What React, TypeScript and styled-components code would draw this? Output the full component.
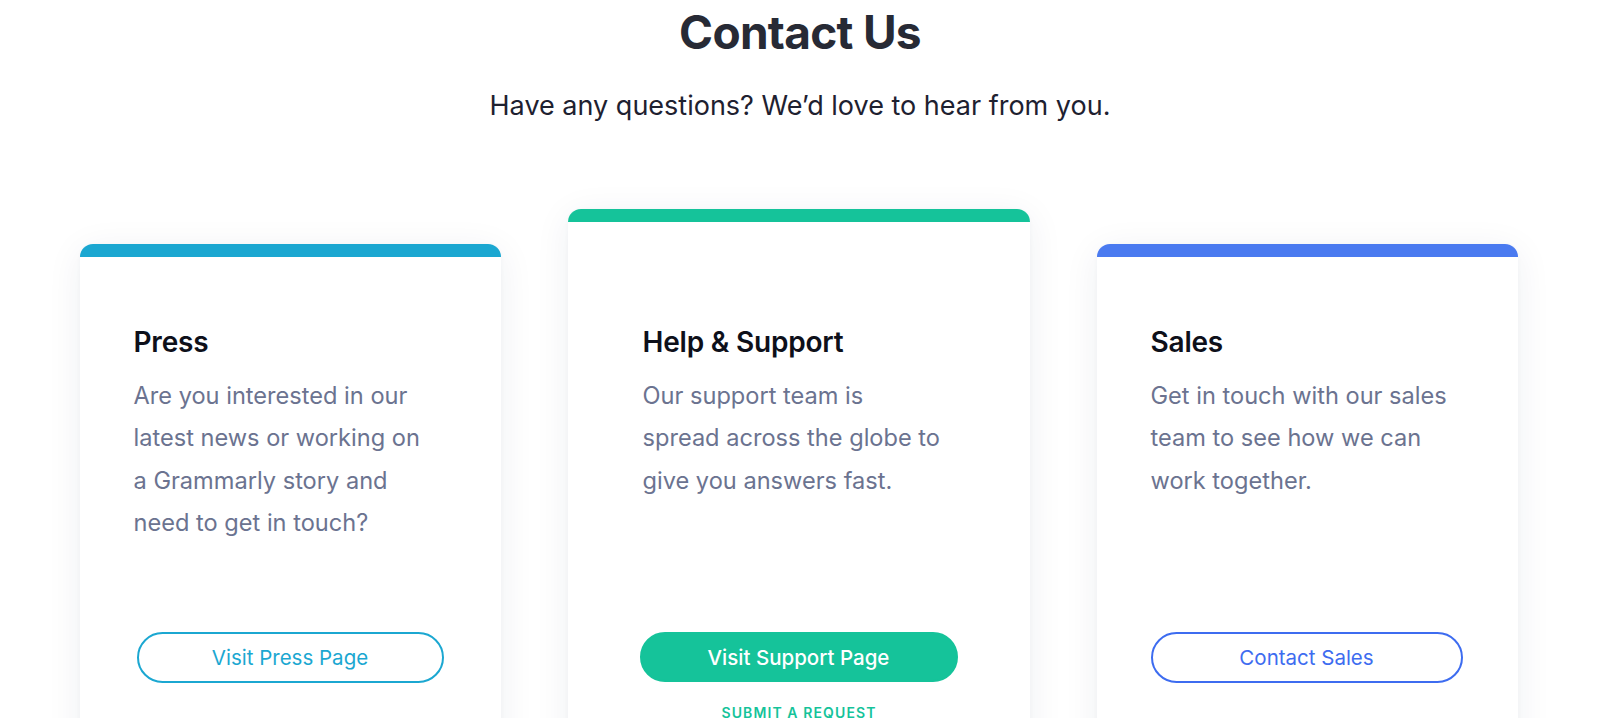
import React from "react";
import styled, { createGlobalStyle } from "styled-components";

const GlobalStyle = createGlobalStyle`
  html, body {
    margin: 0;
    padding: 0;
    background: #ffffff;
    overflow: hidden;
  }
  body {
    font-family: Inter, "Noto Sans", "Liberation Sans", sans-serif;
    -webkit-font-smoothing: antialiased;
  }
  * { box-sizing: border-box; }
`;

const Page = styled.main`
  height: 718px;
  overflow: hidden;
  display: flex;
  flex-direction: column;
  align-items: center;
  padding-top: 4px;
`;

const Title = styled.h1`
  margin: 0;
  font-size: 46px;
  line-height: 56px;
  font-weight: 700;
  color: #272a35;
  letter-spacing: -0.7px;
`;

const Subtitle = styled.p`
  margin: 30px 0 0;
  font-size: 27px;
  line-height: 32px;
  font-weight: 400;
  color: #1e2130;
`;

const CardRow = styled.div`
  margin-top: 87px;
  padding-right: 3px;
  display: flex;
  align-items: flex-start;
  gap: 67px;
`;

const Card = styled.section<{ $width: number; $offset: number }>`
  width: ${(p) => p.$width}px;
  margin-top: ${(p) => p.$offset}px;
  height: 560px;
  background: #ffffff;
  border-radius: 13px;
  overflow: hidden;
  box-shadow: 0 6px 36px rgba(30, 40, 80, 0.07), 0 1px 4px rgba(30, 40, 80, 0.03);
  display: flex;
  flex-direction: column;
`;

const TopBar = styled.div<{ $color: string }>`
  height: 12.5px;
  background: ${(p) => p.$color};
  flex-shrink: 0;
`;

const CardBody = styled.div<{ $pad: number; $top: number }>`
  padding: ${(p) => p.$top}px ${(p) => p.$pad}px 0;
  display: flex;
  flex-direction: column;
`;

const CardTitle = styled.h2`
  margin: 0;
  font-size: 28px;
  line-height: 36px;
  font-weight: 600;
  color: #0e101a;
  letter-spacing: -0.2px;
`;

const Description = styled.p`
  margin: 14.5px 0 0;
  min-height: 257.5px;
  font-size: 23.6px;
  line-height: 42.5px;
  font-weight: 400;
  color: #6b7390;
`;

const Button = styled.a<{ $color: string; $filled?: boolean; $width: number; $shift: number }>`
  display: flex;
  align-items: center;
  justify-content: center;
  width: ${(p) => p.$width}px;
  margin-left: ${(p) => p.$shift}px;
  height: ${(p) => (p.$filled ? 50 : 51)}px;
  border-radius: 26px;
  border: 2px solid ${(p) => p.$color};
  background: ${(p) => (p.$filled ? p.$color : "#ffffff")};
  color: ${(p) => (p.$filled ? "#ffffff" : p.$color)};
  font-size: 20.5px;
  font-weight: ${(p) => (p.$filled ? 500 : 400)};
  text-decoration: none;
  cursor: pointer;
`;

const SubLink = styled.a`
  margin-top: 21px;
  align-self: center;
  margin-left: 1px;
  font-size: 14px;
  line-height: 20px;
  font-weight: 600;
  letter-spacing: 1.1px;
  text-transform: uppercase;
  color: #15c39a;
  text-decoration: none;
`;

type CardData = {
  title: string;
  lines: string[];
  color: string;
  button: string;
  width: number;
  offset: number;
  pad: number;
  top: number;
  btnWidth: number;
  btnShift: number;
  filled?: boolean;
  btnColor: string;
};

const cards: CardData[] = [
  {
    title: "Press",
    lines: ["Are you interested in our", "latest news or working on", "a Grammarly story and", "need to get in touch?"],
    color: "#1ba7d1",
    btnColor: "#1ba7d1",
    button: "Visit Press Page",
    width: 421,
    offset: 35,
    pad: 54,
    top: 67.5,
    btnWidth: 307,
    btnShift: 3,
  },
  {
    title: "Help & Support",
    lines: ["Our support team is", "spread across the globe to", "give you answers fast."],
    color: "#15c39a",
    btnColor: "#15c39a",
    button: "Visit Support Page",
    width: 462,
    offset: 0,
    pad: 75,
    top: 102.5,
    btnWidth: 318,
    btnShift: -3,
    filled: true,
  },
  {
    title: "Sales",
    lines: ["Get in touch with our sales", "team to see how we can", "work together."],
    color: "#4a7af0",
    btnColor: "#3d6cf0",
    button: "Contact Sales",
    width: 421,
    offset: 35,
    pad: 54,
    top: 67.5,
    btnWidth: 312,
    btnShift: 0,
  },
];

export default function App() {
  return (
    <>
      <GlobalStyle />
      <Page>
        <Title>Contact Us</Title>
        <Subtitle>Have any questions? We’d love to hear from you.</Subtitle>
        <CardRow>
          {cards.map((c) => (
            <Card key={c.title} $width={c.width} $offset={c.offset}>
              <TopBar $color={c.color} />
              <CardBody $pad={c.pad} $top={c.top}>
                <CardTitle>{c.title}</CardTitle>
                <Description>
                  {c.lines.map((l, i) => (
                    <React.Fragment key={i}>
                      {l}
                      {i < c.lines.length - 1 && <br />}
                    </React.Fragment>
                  ))}
                </Description>
                <Button
                  href="#"
                  $color={c.btnColor}
                  $filled={c.filled}
                  $width={c.btnWidth}
                  $shift={c.btnShift}
                >
                  {c.button}
                </Button>
                {c.filled && <SubLink href="#">Submit a request</SubLink>}
              </CardBody>
            </Card>
          ))}
        </CardRow>
      </Page>
    </>
  );
}
